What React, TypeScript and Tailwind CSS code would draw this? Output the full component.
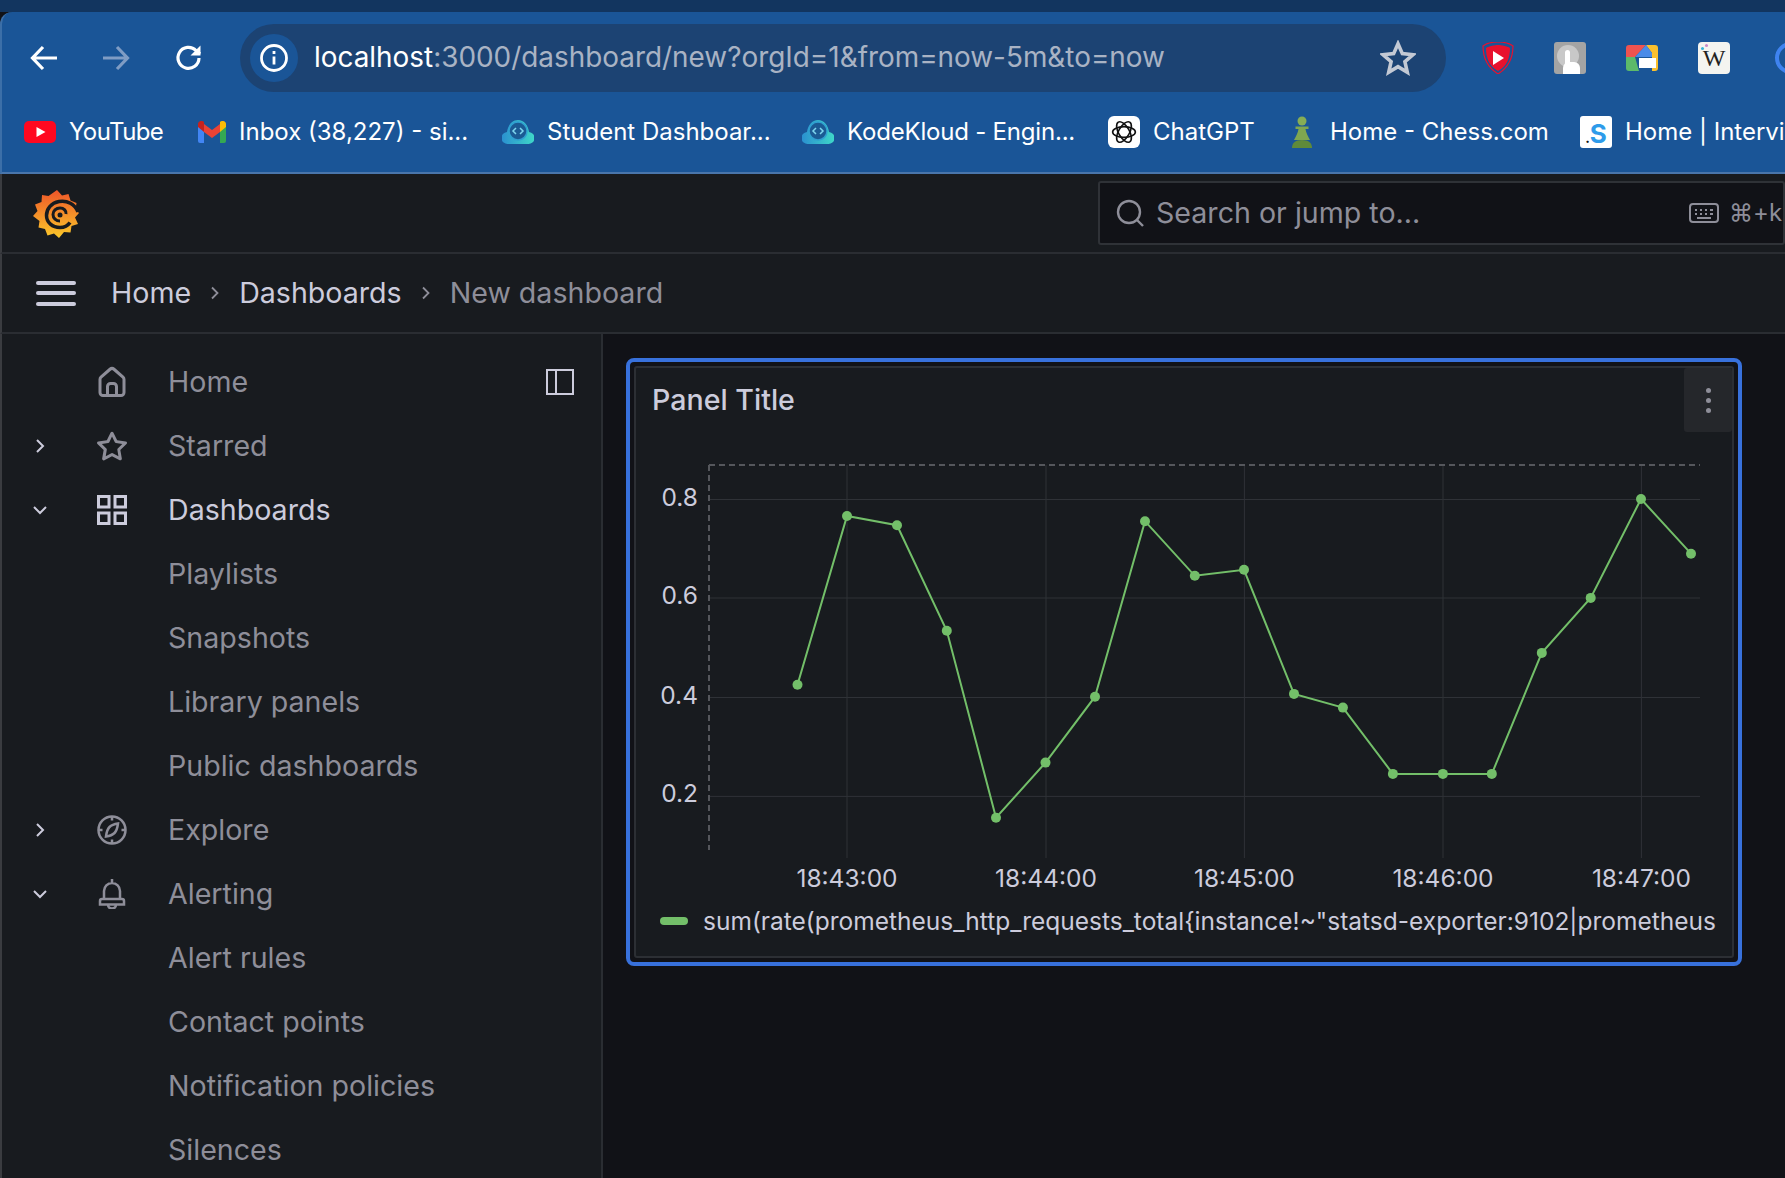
import React from "react";

const ui = { fontFamily: "Inter, 'Noto Sans', sans-serif" };

const points = [
  [797.5, 684.7], [847, 516], [897, 525.2], [946.8, 630.8], [996, 817.7], [1045.5, 762.6], [1095, 696.7],
  [1145, 521.2], [1194.8, 575.8], [1244, 569.8], [1294, 693.9], [1342.9, 707.6], [1392.9, 773.9],
  [1442.9, 773.9], [1491.8, 773.9], [1541.8, 652.9], [1590.7, 597.9], [1641, 499], [1691, 553.7],
];
const yTicks = [
  { y: 499.5, label: "0.8" },
  { y: 598, label: "0.6" },
  { y: 697.5, label: "0.4" },
  { y: 796.4, label: "0.2" },
];
const xTicks = [
  { x: 847, label: "18:43:00" },
  { x: 1046, label: "18:44:00" },
  { x: 1244.4, label: "18:45:00" },
  { x: 1443, label: "18:46:00" },
  { x: 1641.4, label: "18:47:00" },
];

function Chart() {
  return (
    <svg viewBox="636 440 1096 460" className="block w-[1096px] h-[460px]" style={ui}>
      {yTicks.map((t) => (
        <g key={t.label}>
          <line x1="709" x2="1700" y1={t.y} y2={t.y} stroke="#2f3237" strokeWidth="1" />
          <text x="698" y={t.y + 6} textAnchor="end" fontSize="24.500" fill="#ccccdc">{t.label}</text>
        </g>
      ))}
      {xTicks.map((t) => (
        <g key={t.label}>
          <line x1={t.x} x2={t.x} y1="465" y2="858" stroke="#2f3237" strokeWidth="1" />
          <text x={t.x} y="887" textAnchor="middle" fontSize="24.500" fill="#ccccdc">{t.label}</text>
        </g>
      ))}
      <line x1="709" x2="1700" y1="465" y2="465" stroke="#55575c" strokeWidth="2" strokeDasharray="6 4" />
      <line x1="709" x2="709" y1="465" y2="850" stroke="#55575c" strokeWidth="2" strokeDasharray="6 4" />
      <polyline points={points.map((p) => p.join(",")).join(" ")} fill="none" stroke="#73bf69" strokeWidth="2" />
      {points.map((p, i) => (
        <circle key={i} cx={p[0]} cy={p[1]} r="5" fill="#73bf69" />
      ))}
    </svg>
  );
}

function GrafanaLogo() {
  return (
    <svg viewBox="0 0 46 48" className="w-[46px] h-[48px]">
      <defs>
        <linearGradient id="gf" x1="0" y1="0" x2="0" y2="1">
          <stop offset="0" stopColor="#ee5529" />
          <stop offset="1" stopColor="#fbc92a" />
        </linearGradient>
      </defs>
      <path
        d="M24 0l5 5.500 6.500-1.500 2 6.500 6 2.500-1 6.500L46 23l-4 4.500 3 6.500-6.500 2-1 6.500-6.500-.500L26 48l-5-4.500-6.500 2-2.500-6.500-6.500-1.500 1-6.500L0 26l4.500-5-2.500-6.500 6.500-2.500.5-7 6.500 1z"
        fill="url(#gf)"
      />
      <path d="M45 22C42 14 34 10 26 11.500 18 13 13.500 19 13.500 25.500c0 7 6 12 13.500 12 4 0 8-2 10-5" fill="none" stroke="#181b1f" strokeWidth="3.500" />
      <path d="M27 31c-4 0-7-3-7-6.500s3-6.500 7-6.500 6.500 3 6 6" fill="none" stroke="#181b1f" strokeWidth="3" />
      <circle cx="27" cy="25" r="2.500" fill="#181b1f" />
    </svg>
  );
}

function KodeKloud({ id }: { id: string }) {
  return (
    <svg viewBox="0 0 32 26" className="w-8 h-[26px]">
      <defs>
        <linearGradient id={id} x1="0" y1="0" x2="1" y2="0">
          <stop offset="0" stopColor="#2a8fd0" />
          <stop offset="1" stopColor="#3fd8c8" />
        </linearGradient>
      </defs>
      <path d="M6 25a6 6 0 0 1-1-12C6 6 10 1 16 1s10 5 11 12a6 6 0 0 1-1 12z" fill={`url(#${id})`} />
      <circle cx="16" cy="12" r="9" fill="#1b5a93" stroke="#2f9fd0" strokeWidth="1.500" />
      <path d="M14 9l-3 3 3 3M18 9l3 3-3 3" fill="none" stroke="#7fd6ee" strokeWidth="1.500" />
    </svg>
  );
}

const bookmarks: { label: string; width: string; track?: string; icon: React.ReactNode }[] = [
  {
    label: "YouTube",
    width: "w-[174px]",
    track: "tracking-[-0.6px]",
    icon: (
      <svg viewBox="0 0 32 22" className="w-8 h-[22px]">
        <rect width="32" height="22" rx="5" fill="#ff0820" />
        <path d="M12.500 6l9 5-9 5z" fill="#fff" />
      </svg>
    ),
  },
  {
    label: "Inbox (38,227) - si...",
    width: "w-[304px]",
    icon: (
      <svg viewBox="0 0 28 22" className="w-7 h-[22px]">
        <path d="M0 3v17a2 2 0 0 0 2 2h4V8z" fill="#4285f4" />
        <path d="M28 3v17a2 2 0 0 1-2 2h-4V8z" fill="#34a853" />
        <path d="M6 3l8 6 8-6v8l-8 6-8-6z" fill="#ea4335" />
        <path d="M0 3c0-3 4-4 6-2v10L0 6z" fill="#c5221f" />
        <path d="M28 3c0-3-4-4-6-2v10l6-5z" fill="#fbbc04" />
      </svg>
    ),
  },
  { label: "Student Dashboar...", width: "w-[300px]", icon: <KodeKloud id="kk1" /> },
  { label: "KodeKloud - Engin...", width: "w-[306px]", track: "tracking-[-0.2px]", icon: <KodeKloud id="kk2" /> },
  {
    label: "ChatGPT",
    width: "w-[184px]",
    icon: (
      <div className="w-8 h-8 rounded-md bg-white flex items-center justify-center">
        <svg viewBox="0 0 24 24" className="w-[26px] h-[26px]" fill="none" stroke="#111" strokeWidth="1.500">
          <ellipse cx="12" cy="12" rx="10.500" ry="5" />
          <ellipse cx="12" cy="12" rx="10.500" ry="5" transform="rotate(60 12 12)" />
          <ellipse cx="12" cy="12" rx="10.500" ry="5" transform="rotate(120 12 12)" />
        </svg>
      </div>
    ),
  },
  {
    label: "Home - Chess.com",
    width: "w-[288px]",
    icon: (
      <svg viewBox="0 0 20 32" className="w-5 h-8 mr-[5px]">
        <circle cx="10" cy="5" r="4.500" fill="#86ad55" />
        <path d="M3.500 10.500h13v2.500h-3c.5 4 2.500 7 4.500 11H2c2-4 4-7 4.500-11h-3z" fill="#7fa650" />
        <path d="M0 32c0-5 3-8 10-8s10 3 10 8z" fill="#5f8a3a" />
      </svg>
    ),
  },
  {
    label: "Home | Interview",
    width: "w-[280px]",
    icon: (
      <div className="w-8 h-8 rounded-[3px] bg-white flex items-end justify-center leading-none">
        <span className="text-[#111] text-[14px] font-bold mb-[3px]">.</span>
        <span className="text-[#2e9bea] text-[26px] font-bold leading-[28px]">S</span>
      </div>
    ),
  },
];

const navItems: { label: string; chevron?: "right" | "down"; icon?: React.ReactNode; active?: boolean }[] = [
  {
    label: "Home",
    icon: (
      <svg viewBox="0 0 24 24" className="w-9 h-9" fill="currentColor">
        <path d="M20,8h0L14,2.740a3,3,0,0,0-4,0L4,8a3,3,0,0,0-1,2.260V19a3,3,0,0,0,3,3H18a3,3,0,0,0,3-3V10.250A3,3,0,0,0,20,8ZM14,20H10V15a1,1,0,0,1,1-1h2a1,1,0,0,1,1,1Zm5-1a1,1,0,0,1-1,1H16V15a3,3,0,0,0-3-3H11a3,3,0,0,0-3,3v5H6a1,1,0,0,1-1-1V10.250a1,1,0,0,1,.340-.750l6-5.250a1,1,0,0,1,1.320,0l6,5.250a1,1,0,0,1,.340.750Z" />
      </svg>
    ),
  },
  {
    label: "Starred",
    chevron: "right",
    icon: (
      <svg viewBox="0 0 24 24" className="w-9 h-9" fill="currentColor">
        <path d="M22,9.670A1,1,0,0,0,21.140,9l-5.690-.830L12.900,3a1,1,0,0,0-1.800,0L8.550,8.160,2.860,9a1,1,0,0,0-.810.680,1,1,0,0,0,.250,1l4.130,4-1,5.680A1,1,0,0,0,6.900,21.440L12,18.770l5.100,2.670a.930.930,0,0,0,.460.120,1,1,0,0,0,.590-.190,1,1,0,0,0,.400-1l-1-5.680,4.130-4A1,1,0,0,0,22,9.670Zm-6.150,4a1,1,0,0,0-.290.880l.720,4.200-3.760-2a1.060,1.060,0,0,0-.940,0l-3.760,2,.72-4.200a1,1,0,0,0-.290-.880l-3-3,4.210-.610a1,1,0,0,0,.760-.550L12,5.700l1.880,3.820a1,1,0,0,0,.760.550l4.210.610Z" />
      </svg>
    ),
  },
  {
    label: "Dashboards",
    chevron: "down",
    active: true,
    icon: (
      <svg viewBox="0 0 30 30" className="w-[30px] h-[30px]" fill="none" stroke="currentColor" strokeWidth="3">
        <rect x="1.500" y="1.500" width="10.500" height="10.500" />
        <rect x="18" y="1.500" width="10.500" height="10.500" />
        <rect x="1.500" y="18" width="10.500" height="10.500" />
        <rect x="18" y="18" width="10.500" height="10.500" />
      </svg>
    ),
  },
  { label: "Playlists" },
  { label: "Snapshots" },
  { label: "Library panels" },
  { label: "Public dashboards" },
  {
    label: "Explore",
    chevron: "right",
    icon: (
      <svg viewBox="0 0 30 30" className="w-[30px] h-[30px]" fill="none" stroke="currentColor" strokeWidth="2.500">
        <circle cx="15" cy="15" r="13.500" />
        <path d="M15 1.500v4M15 24.500v4M1.500 15h4M24.500 15h4" />
        <path d="M21 8.500c-.5 4-2 8-3.500 9.500S12.500 21 9 21.500c.5-4 2-8 3.500-9.500S17.500 9 21 8.500z" />
      </svg>
    ),
  },
  {
    label: "Alerting",
    chevron: "down",
    icon: (
      <svg viewBox="0 0 30 30" className="w-[30px] h-[30px]" fill="none" stroke="currentColor" strokeWidth="2.500">
        <path d="M15 0v3.500M7 20v-8a8 8 0 0 1 16 0v8M5 20h20a2 2 0 0 1 2 2v3.500H3V22a2 2 0 0 1 2-2zM11 25.500c0 3 2 4 4 4s4-1 4-4" />
      </svg>
    ),
  },
  { label: "Alert rules" },
  { label: "Contact points" },
  { label: "Notification policies" },
  { label: "Silences" },
];

function Chevron({ dir }: { dir: "right" | "down" }) {
  return (
    <svg viewBox="0 0 16 16" className="w-4 h-4" fill="none" stroke="currentColor" strokeWidth="2">
      {dir === "right" ? <path d="M5 2l6 6-6 6" /> : <path d="M2 5l6 6 6-6" />}
    </svg>
  );
}

function Crumb() {
  return (
    <svg viewBox="0 0 10 16" className="w-[10px] h-4 mx-[19px]" fill="none" stroke="#8e8e99" strokeWidth="1.800">
      <path d="M2 2.500l5.500 5.500-5.500 5.500" />
    </svg>
  );
}

export default function App() {
  return (
    <div className="w-[1785px] h-[1178px] overflow-hidden bg-[#111217] flex flex-col" style={ui}>
      <div className="h-3 bg-[#12355f] shrink-0" />

      {/* browser chrome */}
      <div className="h-[162px] shrink-0 bg-[#1a5597] rounded-tl-xl border-l-2 border-l-[#3c6fa8] border-b-2 border-b-[#4a76ab] text-white overflow-hidden">
        <div className="h-20 pt-3 flex items-start">
          <svg viewBox="0 0 28 26" className="w-7 h-[26px] shrink-0 ml-[28px] mt-[21px]" fill="none" stroke="#fff" strokeWidth="3.200">
            <path d="M27 13H3M13 2L2.500 13 13 24" />
          </svg>
          <svg viewBox="0 0 28 26" className="w-7 h-[26px] shrink-0 ml-[44px] mt-[21px]" fill="none" stroke="#7f9cc4" strokeWidth="3.200">
            <path d="M1 13h24M15 2l10.500 11L15 24" />
          </svg>
          <svg viewBox="0 0 28 28" className="w-7 h-7 shrink-0 ml-[45px] mt-5" fill="none" stroke="#fff" strokeWidth="3.200">
            <path d="M24 14a10.500 10.500 0 1 1-3-7.500L25 10" />
            <path d="M25.500 1.500v10h-10" fill="#fff" stroke="none" />
          </svg>
          <div className="w-[1206px] h-[68px] shrink-0 ml-[37px] rounded-full bg-[#1c4373] flex items-center pl-[10px] pr-[30px]">
            <div className="w-12 h-12 rounded-full bg-[#1a5597] flex items-center justify-center shrink-0">
              <svg viewBox="0 0 28 28" className="w-7 h-7" fill="none" stroke="#fff" strokeWidth="2.800">
                <circle cx="14" cy="14" r="12.500" />
                <path d="M14 12.500v8M14 7v3" />
              </svg>
            </div>
            <div className="ml-[16px] text-[27.900px] whitespace-nowrap text-[#a9b3c4] flex-1">
              <span className="text-white">localhost</span>:3000/dashboard/new?orgId=1&amp;from=now-5m&amp;to=now
            </div>
            <svg viewBox="0 0 24 24" className="w-9 h-9" fill="none" stroke="#c3c9d4" strokeWidth="2.400">
              <path d="M12 2.500l2.900 6.600 7.100.7-5.400 4.700 1.600 7-6.200-3.700-6.200 3.700 1.600-7L2 9.800l7.100-.7z" />
            </svg>
          </div>
          <div className="flex items-start shrink-0 ml-[36px] pt-[18px] gap-10">
            <svg viewBox="0 0 32 32" className="w-8 h-8">
              <path d="M16 0c4 0 11 1 15 4 0 12-4 21-15 28C5 25 1 16 1 4c4-3 11-4 15-4z" fill="none" stroke="#e8112d" strokeWidth="1.200" />
              <path d="M16 3c3 0 9 1 12 3 0 10-3 18-12 23C7 24 4 16 4 6c3-2 9-3 12-3z" fill="#e8112d" />
              <path d="M11 9l11 7-11 7z" fill="#fff" />
            </svg>
            <div className="w-8 h-8 rounded-[3px] bg-[#a4a4a4] relative overflow-hidden">
              <div className="w-[22px] h-[22px] rounded-full bg-[#c8c8c8] mt-[3px] ml-[3px]" />
              <div className="absolute left-[11px] top-[8px] w-[5px] h-[16px] bg-white rounded-t-full" />
              <div className="absolute left-[9px] top-[20px] w-[17px] h-[12px] bg-white rounded-t-md" />
            </div>
            <svg viewBox="0 0 32 26" className="w-8 h-[26px] mt-[3px]">
              <path d="M0 3a3 3 0 0 1 3-3h17L9 12H0z" fill="#ef5350" />
              <path d="M0 12h9l4 14H3a3 3 0 0 1-3-3z" fill="#5dba6a" />
              <path d="M20 0h9a3 3 0 0 1 3 3v20a3 3 0 0 1-3 3h-3V8z" fill="#fbc02d" />
              <path d="M9 12L20 0l6 8v4H14z" fill="#4a8be8" />
              <rect x="13" y="13" width="17" height="10" fill="#fff" />
            </svg>
            <div className="w-8 h-8 rounded-[4px] bg-[#f4f4f0] flex items-center justify-center text-[#222] text-[24px] leading-none relative" style={{ fontFamily: "'Liberation Serif', serif" }}>
              W
              <div className="absolute left-[3px] top-[5px] w-[3px] h-[3px] rounded-full bg-[#35b5d8]" />
              <div className="absolute left-[7px] top-[2px] w-[3px] h-[3px] rounded-full bg-[#c98ac9]" />
            </div>
            <div className="w-8 h-8 ml-[5px] rounded-full border-[4px] border-[#3f83f0]" />
          </div>
        </div>
        <div className="h-16 flex items-center pl-[22px] whitespace-nowrap text-[24px] mt-[8px]">
          {bookmarks.map((b) => (
            <div key={b.label} className={`${b.width} shrink-0 flex items-center gap-[13px]`}>
              {b.icon}
              <span className={b.track}>{b.label}</span>
            </div>
          ))}
        </div>
      </div>

      {/* grafana top bar */}
      <div className="h-20 shrink-0 bg-[#181b1f] border-l-2 border-l-[#3a3c40] border-b-2 border-b-[#2a2d32] flex">
        <div className="w-[1096px] shrink-0 pl-[31px] pt-[16px]">
          <GrafanaLogo />
        </div>
        <div className="w-[800px] h-16 mt-[7px] bg-[#111217] border-2 border-[#2f3237] rounded-[3px] flex items-center pl-4 text-[#8e8e99] text-[28.600px] whitespace-nowrap">
          <svg viewBox="0 0 28 28" className="w-7 h-7" fill="none" stroke="currentColor" strokeWidth="2.400">
            <circle cx="13" cy="13" r="11" />
            <path d="M21 21l6 6" />
          </svg>
          <span className="ml-[12px] w-[533px] pt-px">Search or jump to...</span>
          <svg viewBox="0 0 30 20" className="w-[30px] h-5" fill="none" stroke="currentColor" strokeWidth="2">
            <rect x="1" y="1" width="28" height="18" rx="3" />
            <path d="M6 7h2M11 7h2M16 7h2M21 7h3M6 11h2M11 11h2M16 11h2M21 11h3M8 15h14" />
          </svg>
          <span className="ml-[10px] text-[24px]">⌘+k</span>
        </div>
      </div>

      {/* breadcrumb bar */}
      <div className="h-20 shrink-0 bg-[#181b1f] border-l-2 border-l-[#3a3c40] border-b-2 border-b-[#2a2d32] flex items-center pl-[34px] text-[28.600px] text-[#ccccdc]">
        <div className="w-10 flex flex-col gap-[6.500px]">
          <div className="h-1 bg-[#ccccdc] rounded-sm" />
          <div className="h-1 bg-[#ccccdc] rounded-sm" />
          <div className="h-1 bg-[#ccccdc] rounded-sm" />
        </div>
        <span className="ml-[35px]">Home</span>
        <Crumb />
        <span>Dashboards</span>
        <Crumb />
        <span className="text-[#8e8e99]">New dashboard</span>
      </div>

      <div className="flex flex-1 min-h-0">
        {/* sidebar */}
        <div className="w-[603px] shrink-0 bg-[#181b1f] border-l-2 border-l-[#3a3c40] border-r-2 border-r-[#2a2d32] pt-[16px] relative">
          {navItems.map((n) => (
            <div key={n.label} className={`h-16 flex items-center text-[28.600px] ${n.active ? "text-[#ccccdc]" : "text-[#8e8e99]"}`}>
              <div className="w-[30px] ml-[23px] flex justify-center text-[#ccccdc]">
                {n.chevron && <Chevron dir={n.chevron} />}
              </div>
              <div className="w-9 h-9 ml-[39px] flex items-center justify-center">{n.icon}</div>
              <span className="ml-[38px]">{n.label}</span>
            </div>
          ))}
          <svg viewBox="0 0 28 26" className="absolute left-[544px] top-[35px] w-7 h-[26px]" fill="none" stroke="#ccccdc" strokeWidth="2">
            <rect x="1" y="1" width="26" height="24" />
            <path d="M10 1v24" />
          </svg>
        </div>

        {/* panel area */}
        <div className="flex-1 pl-[23px] pt-6">
          <div className="w-[1116px] h-[608px] rounded-lg border-4 border-[#3871dc] p-1 relative">
            <div className="h-full border-2 border-[#2c2f34] rounded-[3px] bg-[#181b1f] flex flex-col">
              <div className="h-[72px] pl-[16px] pt-[14px] text-[28.600px] leading-[36px] font-medium text-[#ccccdc]">Panel Title</div>
              <Chart />
              <div className="flex items-center pl-[24px] mt-[3px] text-[24.500px] text-[#ccccdc] whitespace-nowrap">
                <div className="w-7 h-2 rounded bg-[#73bf69]" />
                <span className="ml-[15px]">sum(rate(prometheus_http_requests_total{"{"}instance!~"statsd-exporter:9102|prometheus</span>
              </div>
              <div className="absolute right-[6px] top-[6px] w-12 h-[64px] rounded-[3px] bg-[#25272b] flex flex-col items-center justify-center gap-[5px]">
                <div className="w-[5px] h-[5px] rounded-full bg-[#8e8e99]" />
                <div className="w-[5px] h-[5px] rounded-full bg-[#8e8e99]" />
                <div className="w-[5px] h-[5px] rounded-full bg-[#8e8e99]" />
              </div>
            </div>
          </div>
        </div>
      </div>
    </div>
  );
}
